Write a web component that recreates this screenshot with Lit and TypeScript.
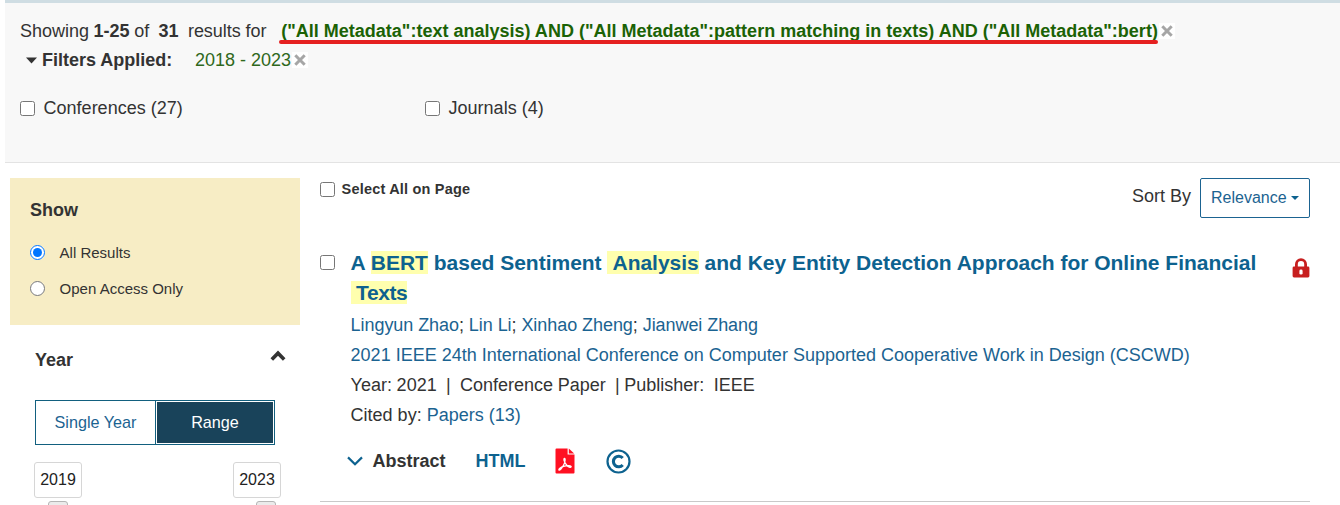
import { LitElement, html, css } from "lit";
import { customElement, state } from "lit/decorators.js";

const cross = html`<svg class="cross" width="12" height="12" viewBox="0 0 12 12">
  <path d="M1.3 1.3L10.7 10.7M10.7 1.3L1.3 10.7" stroke="#a6a6a6" stroke-width="3" fill="none" />
</svg>`;

@customElement("search-summary")
class SearchSummary extends LitElement {
  static styles = css`
    :host { display: block; margin-left: 5px; box-sizing: border-box;
      border-top: 3px solid #cfdde3; border-bottom: 1px solid #e3e3e3; background: #f8f8f8;
      padding: 13px 0 0 15px; height: 163px; font-size: 18px; color: #333; }
    .row { display: flex; height: 30px; line-height: 30px; white-space: pre; align-items: center; }
    .row.second { height: 28px; line-height: 28px; padding-left: 6px; }
    .intro { width: 247px; word-spacing: -0.3px; letter-spacing: -0.02px; }
    .query { color: #1b6205; font-weight: bold; position: relative; margin-left: 14.2px; width: 876.8px; letter-spacing: 0.007px; }
    .mark { position: absolute; left: -2px; top: 23.8px; width: 879px; height: 4px; border-radius: 2px; background: #e52020; }
    .close { display: flex; align-items: center; justify-content: center; background: #fff; width: 16px; height: 16px; margin-left: 1px; }
    .cross { display: block; }
    .arrow { width: 11px; height: 7px; margin-right: 5px; }
    .applied { font-weight: bold; width: 153px; }
    .range { color: #2f681c; width: 96px; }
    .types { display: flex; margin-top: 19px; height: 30px; line-height: 30px; }
    label { display: flex; align-items: center; width: 405px; }
    input { width: 15px; height: 15px; margin: 0 8.6px 0 0; }
  `;
  render() {
    return html`
      <div class="row"><span class="intro">Showing <b>1-25</b> of  <b>31</b>  results for</span>
        <span class="query">("All Metadata":text analysis) AND ("All Metadata":pattern matching in texts) AND ("All Metadata":bert)<i class="mark"></i></span><span class="close">${cross}</span></div>
      <div class="row second"><svg class="arrow" viewBox="0 0 11 7"><path d="M0 0.5h11L5.5 6.5z" fill="#333" /></svg><span class="applied">Filters Applied:</span><span class="range">2018 - 2023</span><span class="close">${cross}</span></div>
      <div class="types">
        <label><input type="checkbox" />Conferences (27)</label>
        <label><input type="checkbox" />Journals (4)</label>
      </div>`;
  }
}

@customElement("filter-sidebar")
class FilterSidebar extends LitElement {
  @state() private access = "all";
  static styles = css`
    :host { display: block; width: 290px; color: #333; }
    .show { background: #f7edc5; height: 147px; box-sizing: border-box; padding: 21px 20px 0; }
    h3 { margin: 0; font-size: 18px; line-height: 22px; font-weight: bold; }
    .opt { display: flex; align-items: center; height: 36px; font-size: 15px; line-height: 17px; }
    .opts { padding-top: 13.5px; }
    .opt input { width: 15px; height: 15px; margin: 0 14.6px 0 0; }
    .year { padding: 24px 14px 0 25px; display: flex; justify-content: space-between; }
    .year svg { margin-top: 1px; }
    .toggle { display: flex; width: 240px; height: 45px; box-sizing: border-box; border: 1px solid #12607f;
      margin: 29px 0 0 25px; font-size: 16.2px; line-height: 43px; text-align: center; }
    .single { width: 119px; color: #1b6391; border-right: 1px solid #12607f; }
    .span { flex: 1; margin: 1px; background: #19435a; color: #fff; line-height: 41px; }
    .bounds { display: flex; justify-content: space-between; padding: 17px 19px 0 24px; }
    .col { display: flex; flex-direction: column; align-items: center; width: 48px; }
    .box { width: 48px; height: 36px; box-sizing: border-box; border: 1px solid #d6d6d6; border-radius: 3px;
      font-size: 16px; line-height: 34px; text-align: center; color: #222; }
    .handle { width: 20px; height: 20px; box-sizing: border-box; margin-top: 3px; border: 1px solid #b5b5b5; border-radius: 3px; background: #ebebeb; }
    .right .handle { margin-left: 18px; }
  `;
  private option(id: string, text: string) {
    return html`<label class="opt"><input type="radio" name="access" .checked=${this.access === id}
      @change=${() => (this.access = id)} /><span>${text}</span></label>`;
  }
  render() {
    return html`
      <section class="show"><h3>Show</h3>
        <div class="opts">${this.option("all", "All Results")}${this.option("open", "Open Access Only")}</div>
      </section>
      <div class="year"><h3>Year</h3>
        <svg width="16" height="12" viewBox="0 0 16 12"><path d="M1.8 9.6L8 3.2L14.2 9.6" fill="none" stroke="#333" stroke-width="3.6" /></svg></div>
      <div class="toggle"><span class="single">Single Year</span><span class="span">Range</span></div>
      <div class="bounds">
        <div class="col"><div class="box">2019</div><div class="handle"></div></div>
        <div class="col right"><div class="box">2023</div><div class="handle"></div></div>
      </div>`;
  }
}

@customElement("result-list")
class ResultList extends LitElement {
  static styles = css`
    :host { display: block; flex: 1; margin: 0 30px 0 20px; color: #333; font-size: 18px; }
    .bar { display: flex; justify-content: space-between; height: 40px; }
    .all { display: flex; height: 22px; align-items: center; font-size: 14.5px; font-weight: bold; letter-spacing: 0.19px; }
    input { width: 15px; height: 15px; margin: 0; flex: none; }
    .all input { margin-right: 6.6px; }
    .sort { display: flex; }
    .sort .by { line-height: 36px; margin-right: 9px; }
    .pick { width: 110px; height: 40px; box-sizing: border-box; border: 1px solid #1b6391; border-radius: 2px; color: #1b6391;
      font-size: 16px; display: flex; align-items: center; padding-left: 10px; }
    .pick svg { margin: 0 0 1px 4px; }
    .item { display: flex; margin-top: 30px; height: 254px; box-sizing: border-box; border-bottom: 1px solid #c9c9c9; }
    .item > input { margin: 7px 15.6px 0 0; }
    .body { flex: 1; white-space: pre; line-height: 30px; }
    h2 { margin: 0 0 2px; font-size: 21px; line-height: 30px; color: #0d628f; font-weight: bold; }
    .t1 { letter-spacing: -0.012px; }
    .t2 { letter-spacing: -0.4px; }
    mark { background: #ffffae; color: inherit; }
    .link { color: #1b6391; }
    .authors { letter-spacing: -0.06px; }
    .meta { word-spacing: -0.35px; }
    .lock { margin: 10px 0 0; }
    .actions { display: flex; align-items: center; margin-top: 17px; margin-left: -3.2px; height: 28px; font-weight: bold; }
    .abs { margin: 0 30px 0 9px; }
    .html { color: #0d628f; width: 49px; margin-right: 30.2px; }
    .copy { margin-left: 31.5px; }
  `;
  render() {
    return html`
      <div class="bar">
        <label class="all"><input type="checkbox" />Select All on Page</label>
        <div class="sort"><span class="by">Sort By</span><span class="pick">Relevance<svg width="8" height="4" viewBox="0 0 8 4"><path d="M0 0h8L4 4z" fill="#0d628f" /></svg></span></div>
      </div>
      <article class="item">
        <input type="checkbox" />
        <div class="body"><h2><div class="t1">A <mark>BERT</mark> based Sentiment <mark> Analysis</mark> and Key Entity Detection Approach for Online Financial</div><div class="t2"><mark> Texts</mark></div></h2><div class="authors"><span class="link">Lingyun Zhao</span>; <span class="link">Lin Li</span>; <span class="link">Xinhao Zheng</span>; <span class="link">Jianwei Zhang</span></div><div class="link">2021 IEEE 24th International Conference on Computer Supported Cooperative Work in Design (CSCWD)</div><div class="meta">Year: 2021  |  Conference Paper  | Publisher:  IEEE</div><div>Cited by: <span class="link">Papers (13)</span></div><div class="actions"><svg width="16" height="10" viewBox="0 0 16 10"><path d="M1 1.4L8 8.2L15 1.4" fill="none" stroke="#0d628f" stroke-width="2.2" /></svg><span class="abs">Abstract</span><span class="html">HTML</span><svg class="pdf" width="20" height="26" viewBox="0 0 20 26"><path d="M1.5 0.5H12.6V6.6H19.5V24.5Q19.5 25.5 18.5 25.5H1.5Q0.5 25.5 0.5 24.5V1.5Q0.5 0.5 1.5 0.5Z" fill="#ff1022" /><path d="M13.8 0.6V5.5H19.2Z" fill="#ff1022" /><path d="M9.4 10.4C8.2 10.8 9 13.8 11.6 17C13.2 19 15.8 20 16.2 18.9C16.5 17.6 12.5 17.2 8.6 18.4C5.4 19.4 3.4 21 3.9 21.8C4.6 22.9 7 20 8.6 17C10.2 13.9 10.6 10.3 9.4 10.4Z" fill="none" stroke="#fff" stroke-width="1.3" /></svg><svg class="copy" width="25" height="25" viewBox="0 0 25 25"><circle cx="12.5" cy="12.5" r="11" fill="none" stroke="#0d628f" stroke-width="2.2" /><path d="M16.7 9A5.3 5.3 0 1 0 16.7 16" fill="none" stroke="#0d628f" stroke-width="3.1" /></svg></div></div>
        <svg class="lock" width="18" height="20" viewBox="0 0 18 20"><path d="M4.4 10V6.2a4.6 4.6 0 0 1 9.2 0V10" fill="none" stroke="#c71f1f" stroke-width="2.8" /><rect x="0.6" y="8.6" width="16.8" height="10.8" rx="1.4" fill="#c71f1f" /><rect x="7.4" y="11.6" width="3.2" height="5" rx="1.4" fill="#fff" /></svg>
      </article>`;
  }
}

@customElement("app-root")
class AppRoot extends LitElement {
  static styles = css`
    :host { display: block; height: 505px; overflow: hidden; background: #fff; font-family: "Liberation Sans", Arial, sans-serif; }
    .main { display: flex; padding: 15px 0 0 10px; }
  `;
  render() {
    return html`<search-summary></search-summary>
      <div class="main"><filter-sidebar></filter-sidebar><result-list></result-list></div>`;
  }
}
